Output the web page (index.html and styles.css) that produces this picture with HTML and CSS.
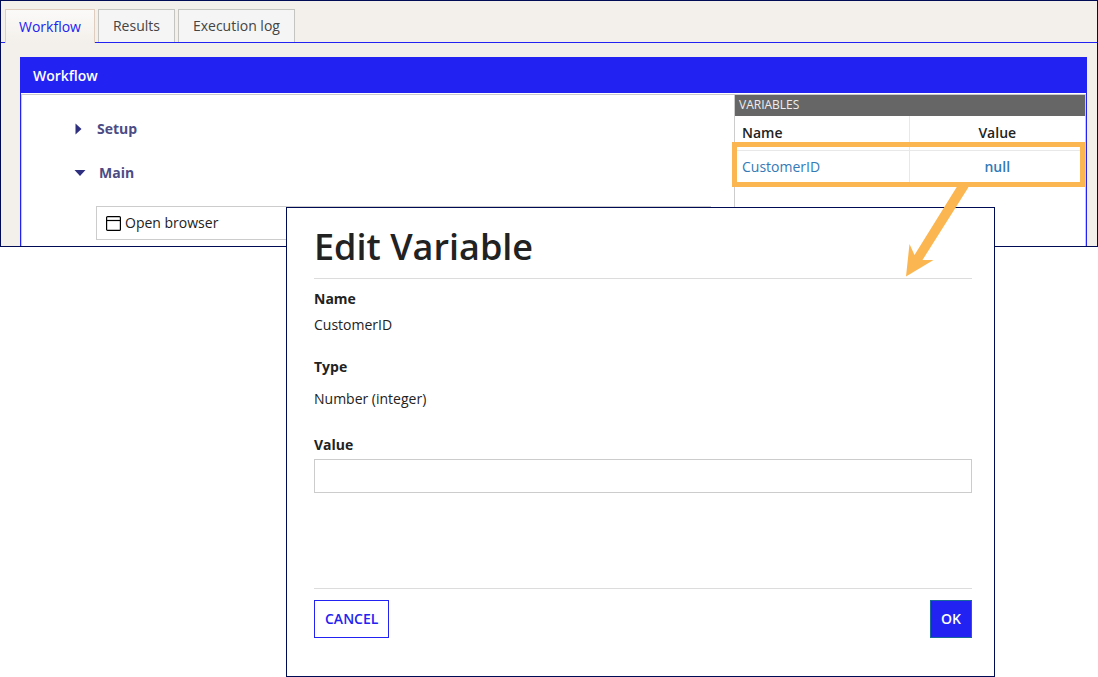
FILE: index.html
```html
<!DOCTYPE html>
<html lang="en">
<head>
<meta charset="utf-8">
<title>Edit Variable</title>
<link rel="stylesheet" href="styles.css">
</head>
<body>
<div class="stage">
  <main class="app">
    <nav class="tabs" role="tablist">
      <button class="tab tab-active" type="button" role="tab" aria-selected="true">Workflow</button>
      <button class="tab" type="button" role="tab" aria-selected="false">Results</button>
      <button class="tab" type="button" role="tab" aria-selected="false">Execution log</button>
    </nav>
    <div class="workspace">
      <section class="panel">
        <h2 class="panel-title">Workflow</h2>
        <div class="panel-body">
          <div class="steps">
            <button class="group" type="button" aria-expanded="false">
              <svg class="caret" width="10" height="10" viewBox="0 0 10 10" aria-hidden="true"><path d="M0.500 -0.500L6.500 5L0.500 10.500Z"/></svg>
              Setup
            </button>
            <button class="group group-open" type="button" aria-expanded="true">
              <svg class="caret" width="10" height="10" viewBox="0 0 10 10" aria-hidden="true"><path d="M-0.500 2H10.500L5 8Z"/></svg>
              Main
            </button>
            <div class="step">
              <svg width="15" height="15" viewBox="0 0 15 15" aria-hidden="true"><rect x="0.6" y="0.6" width="13.8" height="13.8" rx="1" fill="none" stroke="#000" stroke-width="1.2"/><path d="M0 4.5H15" stroke="#000" stroke-width="1.2"/></svg>
              Open browser
            </div>
          </div>
          <aside class="variables">
            <h3 class="variables-title">VARIABLES</h3>
            <table class="variables-table">
              <thead><tr><th class="name-column">Name</th><th>Value</th></tr></thead>
              <tbody><tr><td><a href="#dialog">CustomerID</a></td><td><a class="value" href="#dialog">null</a></td></tr></tbody>
            </table>
            <div class="highlight"></div>
          </aside>
        </div>
      </section>
    </div>
  </main>

  <form class="dialog" id="dialog" role="dialog" aria-labelledby="dialog-title">
    <h1 class="dialog-title" id="dialog-title">Edit Variable</h1>
    <dl class="details">
      <dt>Name</dt>
      <dd>CustomerID</dd>
      <dt>Type</dt>
      <dd class="type">Number (integer)</dd>
    </dl>
    <div class="field">
      <label for="value">Value</label>
      <input id="value" type="text">
    </div>
    <div class="actions">
      <button class="button" type="button">CANCEL</button>
      <button class="button button-primary" type="submit">OK</button>
    </div>
  </form>

  <svg class="arrow" width="64" height="92" viewBox="0 0 64 92" aria-hidden="true"><path d="M54 0L65 0L64 3L18.500 75L29.500 75L2 91.500L5.500 59L10.500 70Z"/></svg>
</div>
</body>
</html>
```
FILE: styles.css
```css
* { box-sizing: border-box; }

body {
  margin: 0;
  background: #fff;
  color: #222;
  font: 14px/20px "Open Sans", "Noto Sans", sans-serif;
}

h1, h2, h3, dl, dd { margin: 0; }
button, input { font: inherit; }
button { cursor: pointer; }
a { color: #337ab7; text-decoration: none; }

/* The app and the dialog share one grid cell, so the dialog lies over the app. */
.stage {
  position: relative;
  display: grid;
}

.app,
.dialog { grid-area: 1 / 1; }

.app {
  align-self: start;
  border: 1px solid #000b55;
  background: #f3f0eb;
}

.tabs {
  display: flex;
  gap: 3px;
  padding: 8px 4px 0;
  border-bottom: 1px solid #2222f2;
}

.tab {
  height: 33px;
  padding: 0 14px;
  border: 1px solid #c4c4c0;
  border-bottom: 0;
  background: #f5f5f5;
  color: #444;
}

.tab-active {
  height: 34px;
  margin-bottom: -1px;
  padding: 0 13px;
  border-color: #dfcdc0;
  background: linear-gradient(#fcfaf9, #f3f0eb);
  color: #2222f2;
}

.workspace { padding: 14px 10px 0 19px; }

.panel {
  border: solid #2222f2;
  border-width: 0 1px;
  background: #fff;
}

.panel-title {
  padding: 9px 12px 7px;
  background: #2222f2;
  color: #fff;
  font-size: 14px;
  font-weight: 600;
}

.panel-body {
  display: flex;
  margin-top: 1px;
  border: 1px solid #ccc;
  border-bottom: 0;
}

.steps {
  flex: 1;
  padding: 12px 23px 6px 53px;
}

.group {
  display: flex;
  align-items: center;
  gap: 12px;
  height: 44px;
  padding: 0;
  border: 0;
  background: none;
  color: #4c4c85;
  font-weight: 700;
}

.group-open { gap: 14px; }

.caret {
  overflow: visible;
  fill: #2f2f80;
}

.step {
  display: flex;
  align-items: center;
  gap: 4px;
  height: 34px;
  margin: 11px 0 0 21px;
  padding: 0 9px;
  border: 1px solid #ccc;
}

.variables {
  position: relative;
  flex: 0 0 351px;
  border-left: 1px solid #ccc;
}

.variables-title {
  padding: 0 4px 1px;
  background: #666;
  color: #eee;
  font-size: 12px;
  font-weight: 400;
}

.variables-table {
  width: 100%;
  border-collapse: collapse;
  table-layout: fixed;
}

.name-column { width: 174px; }

.variables-table th,
.variables-table td {
  height: 34px;
  padding: 0 7px;
  text-align: left;
}

.variables-table th { font-weight: 600; }
.variables-table td { border-top: 1px solid #e8e8e8; }

.variables-table th + th,
.variables-table td + td {
  border-left: 1px solid #e8e8e8;
  text-align: center;
}

.value { font-weight: 600; }

.highlight {
  position: absolute;
  top: 47px;
  right: 0;
  left: -3px;
  height: 45px;
  border: 5px solid #fcb651;
}

.arrow {
  position: absolute;
  top: 185px;
  right: 130px;
  overflow: visible;
  fill: #fcb651;
}

.dialog {
  z-index: 1;
  margin: 207px 103px 0 286px;
  padding: 15px 22px 38px 27px;
  border: 1px solid #000b55;
  background: #fff;
}

.arrow { z-index: 2; }

.dialog-title {
  padding-bottom: 7px;
  border-bottom: 1px solid #dcdcdc;
  font-size: 36px;
  font-weight: 600;
  line-height: 48px;
}

.details { padding-top: 10px; }
.details dt { font-weight: 700; }
.details dd { margin: 6px 0 22px; }
.details .type { margin: 12px 0 26px; }

.field {
  display: flex;
  flex-direction: column;
  gap: 4px;
}

.field label { font-weight: 700; }

.field input {
  height: 34px;
  padding: 0 10px;
  border: 1px solid #ccc;
  background: #fff;
}

.actions {
  display: flex;
  justify-content: space-between;
  margin-top: 95px;
  padding-top: 11px;
  border-top: 1px solid #dcdcdc;
}

.button {
  height: 38px;
  padding: 0 10px;
  border: 1px solid #2222f2;
  background: #fff;
  color: #2222f2;
  font-weight: 600;
}

.button-primary {
  border-color: #196a9a;
  background: #2222f2;
  color: #fff;
}
```
